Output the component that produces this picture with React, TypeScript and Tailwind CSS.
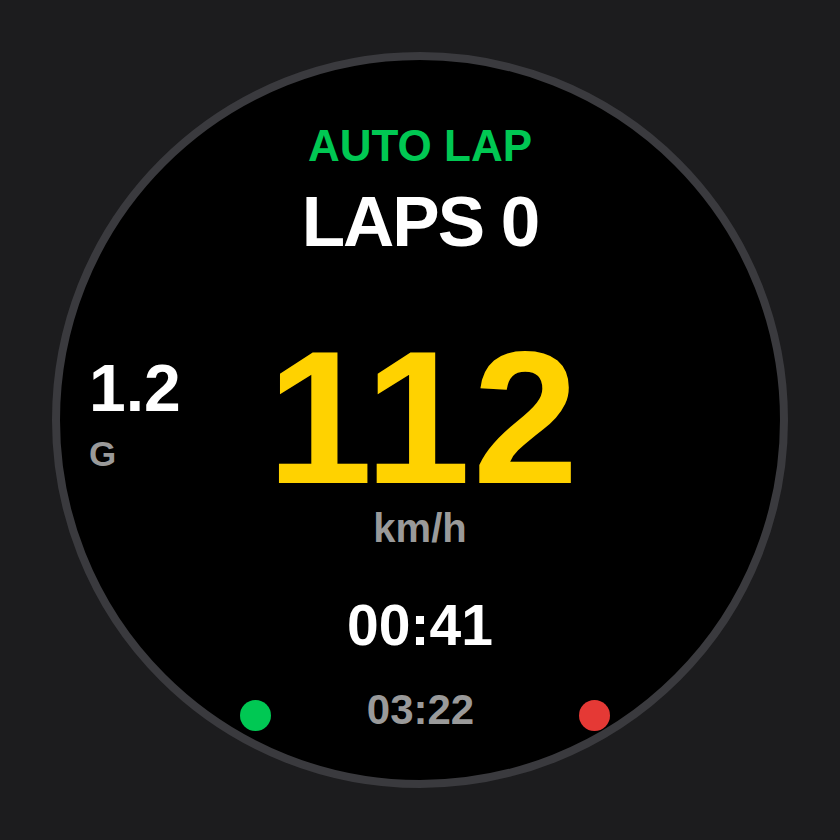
import React from "react";

export default function App() {
  const font = { fontFamily: '"Liberation Sans", Arial, Helvetica, sans-serif' };
  return (
    <div
      className="w-[840px] h-[840px] bg-[#1c1c1e] flex items-center justify-center"
      style={font}
    >
      <div className="w-[736px] h-[736px] rounded-full bg-black border-[8px] border-[#3a3a3e] flex flex-col items-center font-bold">
        <div className="mt-[64px] text-[44px] leading-none text-[#00c853]">AUTO LAP</div>
        <div className="mt-[18px] text-[71px] leading-none text-white tracking-[-2px]">LAPS 0</div>
        <div className="mt-[80px] w-full grid grid-cols-[1fr_auto_1fr] items-start">
          <div className="mt-[18px] pl-[29px] flex flex-col items-start">
            <div className="text-[66px] leading-none text-white">1.2</div>
            <div className="mt-[15px] text-[35px] leading-none text-[#9a9a9a]">G</div>
          </div>
          <div className="pl-[8px] text-[190px] leading-[160px] text-[#ffd200] tracking-[2.5px]">112</div>
          <div />
        </div>
        <div className="mt-[11px] text-[40px] leading-none text-[#9a9a9a]">km/h</div>
        <div className="mt-[49px] text-[57px] leading-none text-white">00:41</div>
        <div className="mt-[34px] pl-[10px] flex items-center">
          <div className="mr-[96px] mt-[12px] w-[31px] h-[31px] rounded-full bg-[#00c853]" />
          <div className="text-[42px] leading-none text-[#9a9a9a]">03:22</div>
          <div className="ml-[105px] mt-[12px] w-[31px] h-[31px] rounded-full bg-[#e53935]" />
        </div>
      </div>
    </div>
  );
}
